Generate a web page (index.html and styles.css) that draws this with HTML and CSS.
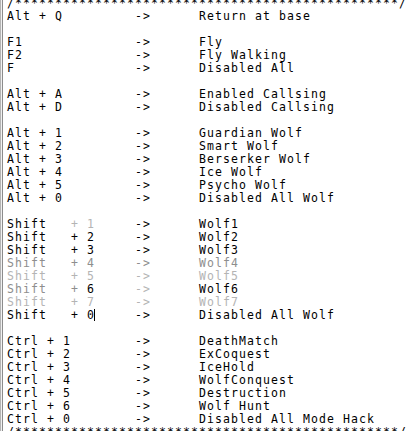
FILE: index.html
```html
<!DOCTYPE html>
<html>
<head>
<meta charset="utf-8">
<link rel="stylesheet" href="styles.css">
</head>
<body>
<div class="editor">
<div class="doc">
<div class="ln">/************************************************/</div>
<div class="ln">Alt + Q         -&gt;      Return at base</div>
<div class="ln"> </div>
<div class="ln">F1              -&gt;      Fly</div>
<div class="ln">F2              -&gt;      Fly Walking</div>
<div class="ln">F               -&gt;      Disabled All</div>
<div class="ln"> </div>
<div class="ln">Alt + A         -&gt;      Enabled Callsing</div>
<div class="ln">Alt + D         -&gt;      Disabled Callsing</div>
<div class="ln"> </div>
<div class="ln">Alt + 1         -&gt;      Guardian Wolf</div>
<div class="ln">Alt + 2         -&gt;      Smart Wolf</div>
<div class="ln">Alt + 3         -&gt;      Berserker Wolf</div>
<div class="ln">Alt + 4         -&gt;      Ice Wolf</div>
<div class="ln">Alt + 5         -&gt;      Psycho Wolf</div>
<div class="ln">Alt + 0         -&gt;      Disabled All Wolf</div>
<div class="ln"> </div>
<div class="ln">Shift   <span class="g2">+ 1</span>     -&gt;      Wolf1</div>
<div class="ln">Shift   + 2     -&gt;      Wolf2</div>
<div class="ln">Shift   + 3     -&gt;      Wolf3</div>
<div class="ln g1">Shift   + 4     -&gt;      Wolf4</div>
<div class="ln g2">Shift   + 5     -&gt;      Wolf5</div>
<div class="ln"><span class="g1">Shift   +</span> 6     <span class="g2">-&gt;</span>      Wolf6</div>
<div class="ln g2">Shift   + 7     -&gt;      Wolf7</div>
<div class="ln">Shift   + 0<span class="caret"></span>     -&gt;      Disabled All Wolf</div>
<div class="ln"> </div>
<div class="ln">Ctrl + 1        -&gt;      DeathMatch</div>
<div class="ln">Ctrl + 2        -&gt;      ExCoquest</div>
<div class="ln">Ctrl + 3        -&gt;      IceHold</div>
<div class="ln">Ctrl + 4        -&gt;      WolfConquest</div>
<div class="ln">Ctrl + 5        -&gt;      Destruction</div>
<div class="ln">Ctrl + 6        -&gt;      Wolf Hunt</div>
<div class="ln">Ctrl + 0        -&gt;      Disabled All Mode Hack</div>
<div class="ln">/************************************************/</div>
</div>
</div>
</body>
</html>
```

FILE: styles.css
```css
html, body {
  margin: 0;
  padding: 0;
  background: #ffffff;
}

.editor {
  width: 411px;
  height: 431px;
  overflow: hidden;
  box-sizing: border-box;
  padding-left: 7px;
  box-shadow: inset 1px 0 #b4b4b4, inset 2px 0 #f0f0f0, inset 3px 0 #8c8c8c;
  background: #ffffff;
}

.doc {
  margin-top: -3px;
  font-family: "DejaVu Sans Mono", monospace;
  font-size: 11.5px;
  letter-spacing: 1.077px;
  line-height: 13px;
  color: #000000;
}

.ln {
  white-space: pre;
  height: 13px;
}

.g1 {
  color: #8e8e8e;
}

.g2 {
  color: #b4b4b4;
}

.caret {
  display: inline-block;
  width: 0;
  height: 12px;
  border-left: 1px solid #000000;
  vertical-align: -2px;
  margin-left: -1px;
}
```
